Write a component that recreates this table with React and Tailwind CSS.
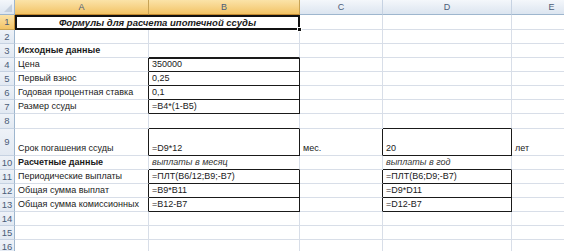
import React from "react";

const cols = ["A", "B", "C", "D", "E"];

// row heights in px, index 0 = header
const rowHeights = [15, 15, 14, 14, 14, 14, 14, 14, 15, 27, 14, 14, 14, 14, 14, 14, 14];

// cell contents: [row][col] -> { text, bold, italic }
const cells = {
  3: { A: { text: "Исходные данные", bold: true } },
  4: { A: { text: "Цена" }, B: { text: "350000" } },
  5: { A: { text: "Первый взнос" }, B: { text: "0,25" } },
  6: { A: { text: "Годовая процентная ставка" }, B: { text: "0,1" } },
  7: { A: { text: "Размер ссуды" }, B: { text: "=B4*(1-B5)" } },
  9: {
    A: { text: "Срок погашения ссуды" },
    B: { text: "=D9*12" },
    C: { text: "мес." },
    D: { text: "20" },
    E: { text: "лет" },
  },
  10: {
    A: { text: "Расчетные данные", bold: true },
    B: { text: "выплаты в месяц", italic: true },
    D: { text: "выплаты в год", italic: true },
  },
  11: { A: { text: "Периодические выплаты" }, B: { text: "=ПЛТ(B6/12;B9;-B7)" }, D: { text: "=ПЛТ(B6;D9;-B7)" } },
  12: { A: { text: "Общая сумма выплат" }, B: { text: "=B9*B11" }, D: { text: "=D9*D11" } },
  13: { A: { text: "Общая сумма комиссионных" }, B: { text: "=B12-B7" }, D: { text: "=D12-B7" } },
};

// boxed cells (thin black border)
const boxed = new Set(["B4", "B5", "B6", "B7", "B9", "D9", "B11", "B12", "B13", "D11", "D12", "D13"]);
const isBoxed = (c, r) => boxed.has(c + r);

const Cell = ({ col, row }) => {
  const ci = cols.indexOf(col);
  const next = cols[ci + 1];
  const data = cells[row]?.[col];

  // black border where this cell or a neighbour is boxed
  const rightDark = isBoxed(col, row) || (next && isBoxed(next, row));
  const bottomDark = isBoxed(col, row) || isBoxed(col, row + 1);
  const topDark = row === 4 && col === "B";

  return (
    <div
      className={
        "flex items-end px-[3px] pb-[2px] overflow-hidden whitespace-nowrap border-r border-b " +
        (rightDark ? "border-r-[#1a1a1a] " : "border-r-[#d8dee8] ") +
        (bottomDark ? "border-b-[#1a1a1a] " : "border-b-[#d8dee8] ") +
        (topDark ? "border-t border-t-[#1a1a1a] " : "") +
        (data?.bold ? "font-bold " : "") +
        (data?.italic ? "italic text-[#333] " : "")
      }
    >
      {data?.text}
    </div>
  );
};

const App = () => {
  const rows = Array.from({ length: 16 }, (_, i) => i + 1);

  return (
    <div
      className="w-[564px] h-[251px] overflow-hidden bg-white text-[9px] text-[#1a1a1a] leading-none"
      style={{ fontFamily: '"Liberation Sans", Arial, sans-serif' }}
    >
      <div
        className="grid grid-cols-[15px_134px_151px_83px_129px_80px]"
        style={{ gridTemplateRows: rowHeights.map((h) => h + "px").join(" ") }}
      >
        {/* CORNER */}
        <div className="relative border-r border-b border-[#9eb6ce] bg-gradient-to-b from-[#f4f7fb] to-[#dce5f0]">
          <svg className="absolute right-[2px] bottom-[2px]" width="8" height="8" viewBox="0 0 8 8">
            <polygon points="8,0 8,8 0,8" fill="#c5d0de" />
          </svg>
        </div>

        {/* COLUMN HEADERS */}
        {cols.map((c) => (
          <div
            key={c}
            className={
              "flex items-center justify-center text-[9px] text-[#4b5d78] border-r border-b " +
              (c === "A" || c === "B"
                ? "bg-gradient-to-b from-[#fbe3a8] to-[#f2c364] border-[#c8a355] border-b-[#c28a30]"
                : "bg-gradient-to-b from-[#f4f7fb] to-[#dce5f0] border-[#c6d2e2] border-b-[#9eb6ce]")
            }
          >
            {c}
          </div>
        ))}

        {/* ROWS */}
        {rows.map((r) => (
          <React.Fragment key={r}>
            <div
              className={
                "flex items-center justify-center text-[9.5px] text-[#4b5d78] border-r border-b " +
                (r === 1
                  ? "bg-gradient-to-b from-[#fbe3a8] to-[#f2c364] border-b-[#c8a355] border-r-[#c28a30]"
                  : "bg-gradient-to-b from-[#eef2f8] to-[#e2e9f2] border-b-[#c6d2e2] border-r-[#9eb6ce]")
              }
            >
              {r}
            </div>

            {r === 1 ? (
              <>
                <div className="col-span-2 relative flex items-center justify-center border-2 border-[#111] font-bold italic text-[9.5px]">
                  Формулы для расчета ипотечной ссуды
                  <div className="absolute right-[-4px] bottom-[-4px] w-[5px] h-[5px] bg-[#111] border border-white" />
                </div>
                <div className="border-r border-b border-[#d8dee8]" />
                <div className="border-r border-b border-[#d8dee8]" />
                <div className="border-r border-b border-[#d8dee8]" />
              </>
            ) : (
              cols.map((c) => <Cell key={c} col={c} row={r} />)
            )}
          </React.Fragment>
        ))}
      </div>
    </div>
  );
};

export default App;
